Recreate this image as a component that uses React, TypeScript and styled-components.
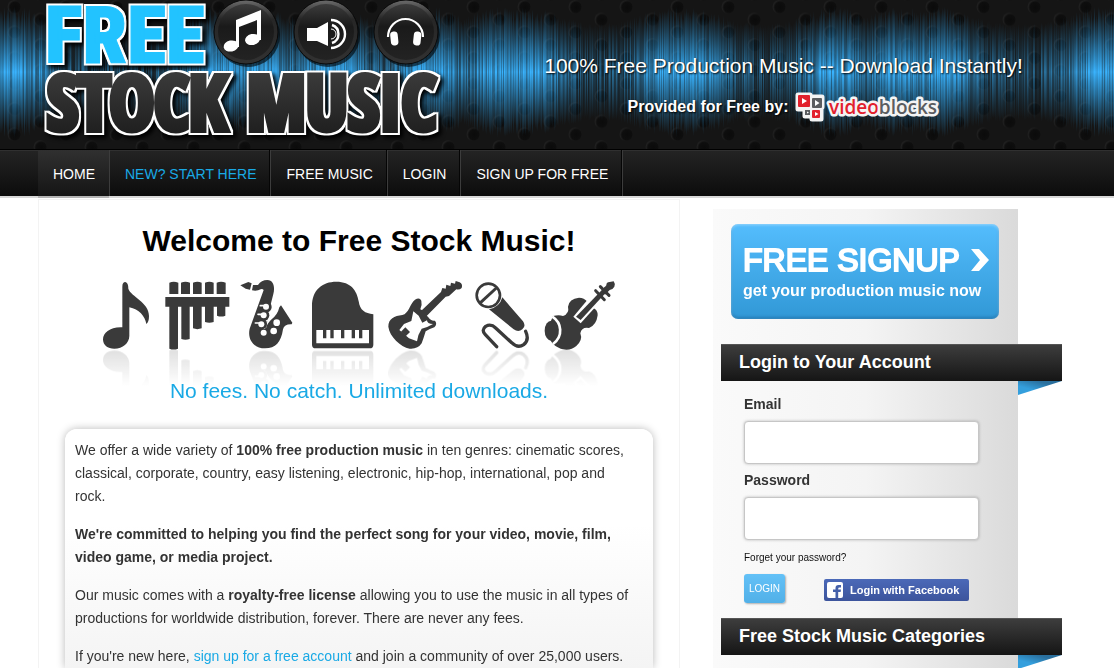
import React from "react";
import styled, { createGlobalStyle } from "styled-components";

const GlobalStyle = createGlobalStyle`
  *, *::before, *::after { box-sizing: border-box; }
  body {
    margin: 0;
    background: #fff;
    color: #333;
    font: 14px/23px "Liberation Sans", Arial, sans-serif;
  }
  h1, h2, p { margin: 0; }
  a { color: #19a9e5; text-decoration: none; }
`;

const Page = styled.div`
  min-height: 100vh;
  display: flex;
  flex-direction: column;
  overflow: hidden;
`;

const Container = styled.div`
  width: 100%;
  max-width: 1038px;
  margin: 0 auto;
`;

const Masthead = styled.header`
  position: relative;
  height: 149px;
  background: #151515;
  overflow: hidden;
`;

const Backdrop = styled.svg`
  position: absolute;
  top: 0;
  left: 0;
`;

const MastheadRow = styled(Container)`
  position: relative;
  display: flex;
`;

const LogoArt = styled.svg`
  flex: none;
  display: block;
  overflow: visible;
`;

const BlocksArt = styled.svg`
  overflow: visible;
  text-shadow: none;
`;

const Pitch = styled.div`
  flex: 1;
  display: flex;
  flex-direction: column;
  align-items: center;
  padding: 52px 0 0 43px;
  gap: 12px;
  color: #fff;
  text-shadow: 1px 1px 2px #000;
`;

const PitchLine = styled.p`
  font-size: 21px;
  line-height: 28px;
`;

const Provider = styled.p`
  display: flex;
  align-items: center;
  gap: 7px;
  font-size: 16px;
  line-height: 30px;
  font-weight: bold;
`;

const NavBar = styled.nav`
  height: 49px;
  border-top: 1px solid #000;
  border-bottom: 2px solid #d8d8d8;
  background: linear-gradient(#242424, #0c0c0c);
  box-shadow: inset 0 1px 0 #303030;
`;

const NavList = styled.ul`
  display: flex;
  margin: 0;
  padding: 0;
  list-style: none;
`;

const NavLink = styled.a<{ $tone?: "active" | "accent" }>`
  display: block;
  height: 48px;
  padding: 0 14px 0 15px;
  line-height: 48px;
  color: ${(p) => (p.$tone === "accent" ? "#19a9e5" : "#fff")};
  background: ${(p) => (p.$tone === "active" ? "linear-gradient(#303030, #151515)" : "transparent")};
  border-bottom: 2px solid ${(p) => (p.$tone === "active" ? "#b4b4b4" : "transparent")};
  background-clip: padding-box;
`;

const NavItem = styled.li`
  height: 46px;
  border-right: 1px solid #3c3c3c;
  box-shadow: inset -1px 0 0 #050505;
`;

const Columns = styled(Container)`
  flex: 1;
  display: flex;
  align-items: stretch;
  gap: 33px;
  padding-right: 58px;
`;

const Main = styled.main`
  flex: 1;
  min-width: 0;
  display: flex;
  flex-direction: column;
  margin-top: 1px;
  padding: 21px 26px 0;
  border: 1px solid #f3f3f3;
  border-bottom: 0;
`;

const Title = styled.h1`
  color: #000;
  font-size: 30px;
  line-height: 40px;
  text-align: center;
`;

const Instruments = styled.svg`
  display: block;
  width: 540px;
  max-width: 100%;
  margin: 5px auto 0;
`;

const Tagline = styled.p`
  margin-top: -7px;
  color: #19a9e5;
  font-size: 21px;
  line-height: 24px;
  text-align: center;
`;

const Card = styled.section`
  flex: 1;
  display: flex;
  flex-direction: column;
  gap: 15px;
  margin-top: 26px;
  padding: 10px 18px 0 10px;
  border-radius: 12px 12px 0 0;
  background: linear-gradient(#fff 40%, #f4f4f4);
  box-shadow: 0 0 8px rgba(0, 0, 0, 0.28);
`;

const Sidebar = styled.aside`
  flex: 0 0 305px;
  min-width: 0;
  display: flex;
  flex-direction: column;
  margin-top: 11px;
  padding: 15px 0 0 8px;
  background: linear-gradient(90deg, #fafafa, #f4f4f4 50%, #dadada);
`;

const Signup = styled.a`
  display: block;
  width: 268px;
  height: 95px;
  margin: 0 0 25px 10px;
  padding: 15px 10px 15px 12px;
  border-radius: 7px;
  color: #fff;
  background: linear-gradient(#54bdfd, #3198d6);
  box-shadow: inset 0 1px 3px rgba(255, 255, 255, 0.4), inset 0 -2px 3px rgba(0, 60, 110, 0.3);
`;

const SignupHead = styled.span`
  display: flex;
  align-items: center;
  justify-content: space-between;
  font-size: 32px;
  line-height: 42px;
  white-space: nowrap;
  -webkit-text-stroke: 2px #fff;
`;

const SignupSub = styled.span`
  display: block;
  font-size: 16px;
  line-height: 20px;
  font-weight: bold;
  white-space: nowrap;
`;

const Ribbon = styled.h2`
  position: relative;
  width: 341px;
  height: 37px;
  padding-left: 18px;
  border-top: 1px solid #555;
  color: #fff;
  font-size: 18px;
  line-height: 34px;
  background: linear-gradient(#3d3d3d, #151515);

  &::after {
    content: "";
    position: absolute;
    top: 100%;
    right: 0;
    width: 44px;
    height: 14px;
    background: linear-gradient(195deg, #2a6f9d 25%, #349fdd 65%);
    clip-path: polygon(0 0, 100% 0, 0 100%);
  }
`;

const LoginForm = styled.form`
  display: flex;
  flex-direction: column;
  padding: 12px 39px 15px 23px;
`;

const Label = styled.label`
  font-weight: bold;
  margin-bottom: 5px;
`;

const Field = styled.input`
  height: 43px;
  margin-bottom: 5px;
  padding: 0 10px;
  border: 1px solid #c6c6c6;
  border-radius: 4px;
  background: #fff;
  box-shadow: 0 0 3px rgba(0, 0, 0, 0.25);
  font: inherit;
`;

const Forgot = styled.a`
  margin-top: 6px;
  color: #111;
  font-size: 10px;
  line-height: 14px;
`;

const Actions = styled.div`
  display: flex;
  align-items: center;
  gap: 39px;
  margin-top: 9px;
`;

const LoginButton = styled.button`
  width: 41px;
  height: 29px;
  padding: 0;
  border: 0;
  border-radius: 3px;
  color: #fff;
  font: 10px/28px "Liberation Sans", Arial, sans-serif;
  background: linear-gradient(#63c1f7, #51b0e8);
  box-shadow: 1px 1px 2px rgba(0, 0, 0, 0.3);
`;

const FacebookButton = styled.button`
  display: flex;
  align-items: center;
  gap: 7px;
  width: 145px;
  height: 22px;
  margin-top: 3px;
  padding: 0 3px;
  border: 0;
  border-radius: 2px;
  color: #fff;
  font: bold 11px/22px "Liberation Sans", Arial, sans-serif;
  white-space: nowrap;
  background: linear-gradient(#4b69b8, #3c549c);
`;

/* Sound bars: a repeatable noise shaped by slow swells. */
const noise = (n: number) => {
  const v = Math.sin(n * 127.1 + 11.7) * 43758.5453;
  return v - Math.floor(v);
};
const peaks = [-5, 15, 215, 260, 330, 430, 500, 528, 670, 690, 835, 900, 940, 1100, 1125, 1230, 1400, 1560, 1720, 1900];
const bars = Array.from({ length: 1920 }, (_, x) => {
  const near = Math.min(...peaks.map((p) => Math.abs(p - x)));
  const swell = Math.exp(-(near * near) / 1500);
  const reach = 44 + 8 * swell + 10 * noise(x) * (0.4 + swell);
  const glow = 0.3 + 0.55 * swell + 0.5 * (noise(x + 5000) - 0.5);
  return { x, reach, glow: Math.min(1, Math.max(0.1, glow)) };
});

function HeaderBackdrop() {
  return (
    <Backdrop width="1920" height="149" viewBox="0 0 1920 149" aria-hidden="true">
      <defs>
        <radialGradient id="hole" cx="0.6" cy="0.55" r="0.55">
          <stop offset="0" stopColor="#0b0b0b" />
          <stop offset="0.75" stopColor="#0e0e0e" />
          <stop offset="1" stopColor="#202020" />
        </radialGradient>
        <pattern id="grille" width="51" height="25.5" patternUnits="userSpaceOnUse" x="-11" y="-6">
          <circle cx="25" cy="12.7" r="6.5" fill="url(#hole)" />
          <circle cx="0" cy="0" r="6.5" fill="url(#hole)" />
          <circle cx="51" cy="0" r="6.5" fill="url(#hole)" />
          <circle cx="0" cy="25.5" r="6.5" fill="url(#hole)" />
          <circle cx="51" cy="25.5" r="6.5" fill="url(#hole)" />
        </pattern>
        <linearGradient id="bar" x1="0" y1="0" x2="0" y2="1">
          <stop offset="0" stopColor="#2b9be0" stopOpacity="0" />
          <stop offset="0.3" stopColor="#32a5ec" stopOpacity="0.65" />
          <stop offset="0.5" stopColor="#3ab4ff" />
          <stop offset="0.7" stopColor="#32a5ec" stopOpacity="0.65" />
          <stop offset="1" stopColor="#2b9be0" stopOpacity="0" />
        </linearGradient>
      </defs>
      <rect width="1920" height="149" fill="url(#grille)" />
      {bars.map((b) => (
        <rect key={b.x} x={b.x} y={72 - b.reach} width="1" height={b.reach * 2} fill="url(#bar)" opacity={b.glow} />
      ))}
    </Backdrop>
  );
}

function Disc({ cx }: { cx: number }) {
  return (
    <g>
      <circle cx={cx + 2} cy="35" r="32" fill="#000" opacity="0.6" />
      <circle cx={cx} cy="32" r="32" fill="url(#rim)" stroke="#0a0a0a" />
      <circle cx={cx} cy="32" r="28" fill="url(#disc)" />
    </g>
  );
}

function SiteLogo() {
  return (
    <LogoArt width="410" height="148" viewBox="38 0 410 148" role="img" aria-label="Free Stock Music">
      <defs>
        <linearGradient id="rim" x1="0" y1="0" x2="0" y2="1">
          <stop offset="0" stopColor="#6a6a6a" />
          <stop offset="0.3" stopColor="#262626" />
          <stop offset="1" stopColor="#323232" />
        </linearGradient>
        <linearGradient id="disc" x1="0" y1="0" x2="0" y2="1">
          <stop offset="0" stopColor="#3c3c3c" />
          <stop offset="0.4" stopColor="#1a1a1a" />
          <stop offset="1" stopColor="#232323" />
        </linearGradient>
        <linearGradient id="slate" gradientUnits="userSpaceOnUse" x1="0" y1="74" x2="0" y2="134">
          <stop offset="0" stopColor="#3a3a3a" />
          <stop offset="1" stopColor="#1f1f1f" />
        </linearGradient>
        <filter id="outline" x="-10%" y="-10%" width="120%" height="130%" colorInterpolationFilters="sRGB">
          <feMorphology in="SourceAlpha" operator="dilate" radius="1.5" result="fat" />
          <feFlood floodColor="#fff" />
          <feComposite in2="fat" operator="in" result="edge" />
          <feGaussianBlur in="fat" stdDeviation="2" />
          <feOffset dx="3" dy="3" result="shade" />
          <feMerge>
            <feMergeNode in="shade" />
            <feMergeNode in="edge" />
            <feMergeNode in="SourceGraphic" />
          </feMerge>
        </filter>
      </defs>
      <Disc cx={246} />
      <Disc cx={326} />
      <Disc cx={406} />
      <g fill="#fff">
        <ellipse cx="231" cy="46" rx="7.5" ry="5.5" transform="rotate(-12 231 46)" />
        <ellipse cx="252.5" cy="39.5" rx="7.5" ry="5.5" transform="rotate(-12 252.5 39.5)" />
        <path d="M236 20 L261 10 V40 H257 V20 L239 27 V47 H236 Z" />
        <path d="M307 28 H317 L328 22 V46 L317 41 H307 Z" />
      </g>
      <g fill="none" stroke="#fff" strokeWidth="2.4">
        <path d="M332 25 A9.5 9.5 0 0 1 332 43 M331 20 A14 14 0 0 1 331 48" />
        <path d="M331 29 A5 5 0 0 1 331 39" strokeWidth="1" />
        <path d="M388 37 A17.5 18 0 1 1 423 37" strokeWidth="2.2" />
      </g>
      <rect x="390.5" y="31.5" width="7.5" height="14" rx="3.5" fill="#fff" transform="rotate(-6 394 38)" />
      <rect x="413.5" y="31.5" width="7.5" height="14" rx="3.5" fill="#fff" transform="rotate(6 417 38)" />
      <g filter="url(#outline)" fill="#22c3ff" stroke="#22c3ff" strokeWidth="1">
        <text x="45" y="63" fontFamily="'Roboto Condensed', sans-serif" fontWeight="900" fontSize="79">
          FREE
        </text>
      </g>
      <g filter="url(#outline)" fill="url(#slate)" stroke="url(#slate)" strokeWidth="6" fontFamily="'Open Sans Condensed', sans-serif" fontWeight="700" fontSize="75">
        <text x="47" y="130">STOCK</text>
        <text x="247" y="130">MUSIC</text>
      </g>
    </LogoArt>
  );
}

function VideoBlocksLogo() {
  return (
    <BlocksArt width="144" height="30" viewBox="0 0 144 30" role="img" aria-label="videoblocks">
      <g fill="#f4f4f4" stroke="#f4f4f4" strokeWidth="5" strokeLinejoin="round">
        <path d="M3 3 H15 V5 H27 V15 H26 V27 H17 V24 H10 V17 H3 Z" />
      </g>
      <g fill="#e2202c">
        <rect x="3" y="3" width="12" height="12" rx="1" />
        <rect x="17" y="18" width="8" height="8" rx="1" />
      </g>
      <g fill="#5b5d60">
        <rect x="17" y="6" width="10" height="10" rx="1" />
        <rect x="10" y="18" width="5" height="5" />
      </g>
      <path d="M7 6 L12 9 L7 12 Z M20 8 L24.5 11 L20 14 Z M20 20 L23.5 22 L20 24 Z M12 19.5 L14 20.5 L12 21.5 Z" fill="#fff" />
      <text x="34" y="22" fontFamily="'Open Sans', sans-serif" fontWeight="600" fontSize="19" stroke="#f4f4f4" strokeWidth="5" strokeLinejoin="round" paintOrder="stroke">
        <tspan fill="#e2202c">video</tspan>
        <tspan fill="#5b5d60">blocks</tspan>
      </text>
    </BlocksArt>
  );
}

function InstrumentArt() {
  return (
    <Instruments viewBox="0 0 1620 360" role="img" aria-label="Musical instruments">
      <defs>
        <linearGradient id="fade" x1="0" y1="0" x2="0" y2="1">
          <stop offset="0" stopColor="#fff" stopOpacity="0.16" />
          <stop offset="1" stopColor="#fff" stopOpacity="0" />
        </linearGradient>
        <mask id="reflection" maskUnits="userSpaceOnUse" x="0" y="250" width="1620" height="110">
          <rect y="250" width="1620" height="110" fill="url(#fade)" />
        </mask>
        <g id="band" fill="#3a3a3a">
          <path d="M100 62 Q100 48 109 48 Q118 50 118 68 C126 92 180 108 180 150 Q180 168 172 174 C168 150 150 130 121 124 V210 C120 232 102 248 76 248 C56 248 42 238 42 220 C42 200 64 182 100 184 Z" />
          <path d="M241 84 V50 Q254 44 268 50 V84 Z M276 84 V50 Q289 44 303 50 V84 Z M312 84 V50 Q325 44 338 50 V84 Z M348 84 V50 Q361 44 374 50 V84 Z M383 84 V50 Q396 44 410 50 V84 Z" />
          <path d="M229 93 H421 V122 H409 V149 Q396 154 384 149 V122 H374 V168 Q361 173 348 168 V122 H338 V187 Q325 192 312 187 V122 H302 V219 Q289 224 277 219 V122 H267 V248 Q254 253 241 248 V122 H229 Z" />
          <path d="M454 58 L478 48 L488 52 L483 71 L470 68 Z M492 57 L507 57 Q517 42 535 42 C555 43 558 64 553 84 L546 112 L530 190 Q534 172 548 160 Q566 146 571 124 L576 118 L610 170 L608 175 Q586 174 582 190 C576 230 560 247 528 247 C498 247 474 224 482 188 L524 72 Q520 68 515 70 Q504 76 489 73 Z" />
          <path d="M552 110 L566 118 Q560 140 546 154 Q533 164 528 188 L518 186 L536 140 Z" fill="#fff" />
          <circle cx="531" cy="123" r="17" />
          <circle cx="524" cy="148" r="17" />
          <circle cx="517" cy="173" r="17" />
          <path d="M514 119 H528 M507 145 H521 M499 171 H514" stroke="#fff" strokeWidth="5" strokeLinecap="round" />
          <g fill="#fff">
            <circle cx="531" cy="122" r="9" />
            <circle cx="524" cy="148" r="9" />
            <circle cx="517" cy="175" r="9" />
            <circle cx="524" cy="200" r="9" />
            <circle cx="563" cy="170" r="10" />
            <circle cx="554" cy="195" r="10" />
          </g>
          <path d="M669 120 C669 72 700 47 742 47 C786 47 804 74 809 106 C813 134 828 142 853 145 V236 Q853 247 842 247 H680 Q669 247 669 236 Z" />
          <path d="M682 192 H702 V217 H712 V192 H724 V217 H734 V192 H756 V217 H766 V192 H788 V217 H798 V192 H810 V217 H820 V192 H840 V232 H682 Z" fill="#fff" />

          <g transform="translate(810 0)">
            <path d="M168 101 Q182 92 187 104 Q190 116 184 130 Q192 132 196 142 L208 154 Q216 166 228 164 Q236 174 226 184 Q212 188 200 196 Q194 216 188 232 Q176 250 152 248 C124 242 92 212 88 182 C88 158 106 150 130 147 C150 142 152 114 168 101 Z" />
            <path d="M186 135 L246 78 L250 66 L260 68 L262 56 L274 60 L276 50 L288 53 L290 45 L302 49 Q312 54 308 66 Q302 72 292 70 L270 90 L260 92 L200 153 Z" />
            <path d="M163 136 L179 149 L190 170 L204 163 Q204 174 222 174 Q206 184 188 188 Q176 206 174 226 L150 217 L121 192 L135 174 L157 165 Z" fill="#fff" />
            <path d="M139 184 L153 198 L140 211 L126 197 Z" />
            <circle cx="388" cy="88" r="35" fill="none" stroke="#3a3a3a" strokeWidth="8" />
            <path d="M362 112 L412 66" stroke="#3a3a3a" strokeWidth="9" />
            <path d="M390 130 Q422 124 430 94 L492 166 Q502 180 490 190 Q478 200 464 190 Z" />
            <path d="M413 242 L379 206 Q366 192 380 181 Q396 172 410 186 L458 230 Q476 248 494 236 Q512 222 500 196" fill="none" stroke="#3a3a3a" strokeWidth="10" strokeLinecap="round" />
            <path d="M582 150 Q600 146 612 150 Q632 142 627 122 Q630 98 660 95 Q676 96 684 106 L702 126 Q716 130 716 148 Q712 178 690 186 Q668 182 664 202 Q672 222 652 240 Q636 254 612 250 C594 246 580 234 574 222 Q562 190 582 150 Z" />
            <path d="M580 152 C608 170 614 210 582 234" fill="none" stroke="#fff" strokeWidth="8" />
            <ellipse cx="577" cy="194" rx="20" ry="30" />
            <path d="M643 152 L702 82 L726 104 L665 172 Z" fill="#fff" />
            <path d="M651 152 L738 62 L748 72 L665 162 Z" />
            <path d="M728 74 L742 58 Q742 48 752 48 L764 46 Q770 54 766 62 Q762 70 752 72 L738 86 Z" />
            <path d="M710 74 L736 101 M724 62 L750 88" stroke="#3a3a3a" strokeWidth="9" strokeLinecap="round" />
          </g>
        </g>
      </defs>
      <use href="#band" />
      <g mask="url(#reflection)">
        <use href="#band" transform="translate(0 502) scale(1 -1)" />
      </g>
    </Instruments>
  );
}

const navItems: { text: string; tone?: "active" | "accent" }[] = [
  { text: "HOME", tone: "active" },
  { text: "NEW? START HERE", tone: "accent" },
  { text: "FREE MUSIC" },
  { text: "LOGIN" },
  { text: "SIGN UP FOR FREE" },
];

export default function App() {
  return (
    <Page>
      <GlobalStyle />
      <Masthead>
        <HeaderBackdrop />
        <MastheadRow>
          <SiteLogo />
          <Pitch>
            <PitchLine>100% Free Production Music -- Download Instantly!</PitchLine>
            <Provider>
              Provided for Free by:
              <VideoBlocksLogo />
            </Provider>
          </Pitch>
        </MastheadRow>
      </Masthead>
      <NavBar>
        <Container>
          <NavList>
            {navItems.map((item) => (
              <NavItem key={item.text}>
                <NavLink href="#" $tone={item.tone}>
                  {item.text}
                </NavLink>
              </NavItem>
            ))}
          </NavList>
        </Container>
      </NavBar>
      <Columns>
        <Main>
          <Title>Welcome to Free Stock Music!</Title>
          <InstrumentArt />
          <Tagline>No fees. No catch. Unlimited downloads.</Tagline>
          <Card>
            <p>
              We offer a wide variety of <b>100% free production music</b> in ten genres: cinematic scores, classical,
              corporate, country, easy listening, electronic, hip-hop, international, pop and rock.
            </p>
            <p>
              <b>
                We're committed to helping you find the perfect song for your video, movie, film, video game, or media
                project.
              </b>
            </p>
            <p>
              Our music comes with a <b>royalty-free license</b> allowing you to use the music in all types of
              productions for worldwide distribution, forever. There are never any fees.
            </p>
            <p>
              If you're new here, <a href="#">sign up for a free account</a> and join a community of over 25,000 users.
            </p>
          </Card>
        </Main>
        <Sidebar>
          <Signup href="#">
            <SignupHead>
              FREE SIGNUP
              <svg width="18" height="24" viewBox="0 0 18 24" aria-hidden="true">
                <path d="M0 1 H8 L18 12 L8 23 H0 L9 12 Z" fill="#fff" />
              </svg>
            </SignupHead>
            <SignupSub>get your production music now</SignupSub>
          </Signup>
          <Ribbon>Login to Your Account</Ribbon>
          <LoginForm>
            <Label htmlFor="email">Email</Label>
            <Field id="email" type="email" />
            <Label htmlFor="password">Password</Label>
            <Field id="password" type="password" />
            <Forgot href="#">Forget your password?</Forgot>
            <Actions>
              <LoginButton type="submit">LOGIN</LoginButton>
              <FacebookButton type="button">
                <svg width="16" height="16" viewBox="0 0 16 16" aria-hidden="true">
                  <rect width="16" height="16" rx="2" fill="#fff" />
                  <path d="M8.5 16 V10 H6 V7.5 H8.5 V6 Q8.5 3 11.5 3 H14 V5.5 H12.5 Q11.2 5.5 11.2 6.7 V7.5 H14 L13.6 10 H11.2 V16 Z" fill="#4460aa" />
                </svg>
                Login with Facebook
              </FacebookButton>
            </Actions>
          </LoginForm>
          <Ribbon>Free Stock Music Categories</Ribbon>
        </Sidebar>
      </Columns>
    </Page>
  );
}
